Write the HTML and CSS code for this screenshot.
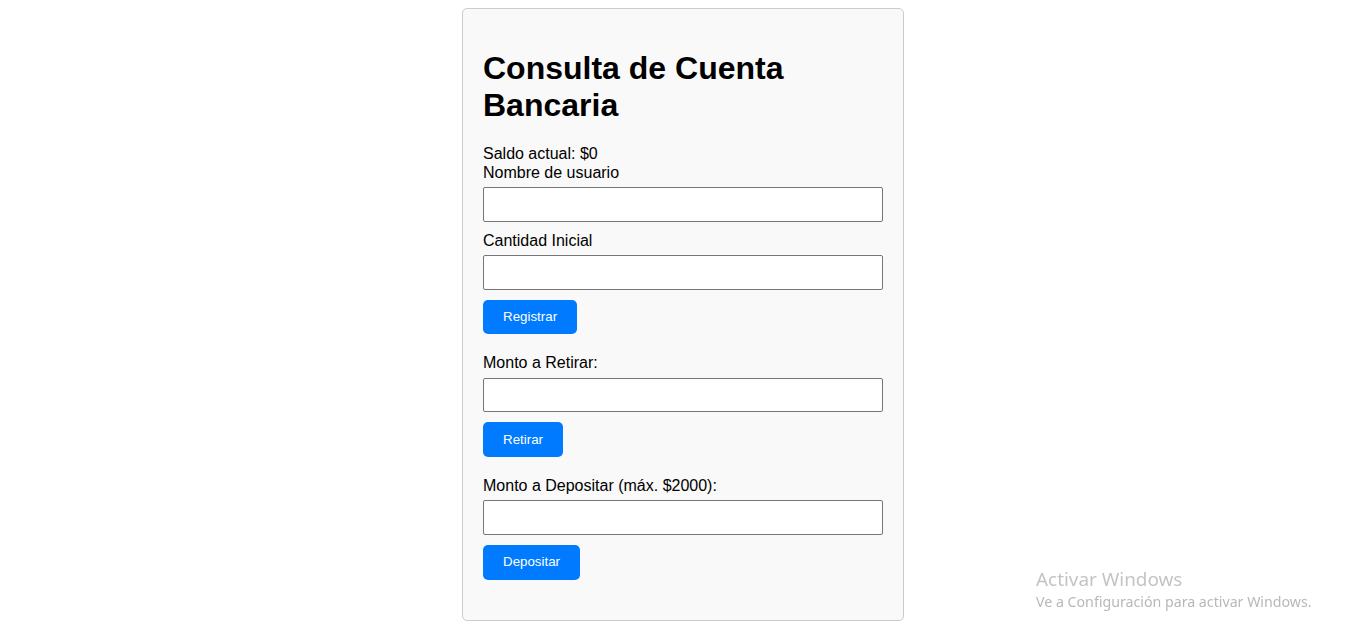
FILE: index.html
```html
<!DOCTYPE html>
<html lang="es">
<head>
<meta charset="utf-8">
<title>Consulta de Cuenta Bancaria</title>
<link rel="stylesheet" href="styles.css">
</head>
<body>
<div class="card">
  <h1 class="title">Consulta de Cuenta Bancaria</h1>
  <div class="balance">Saldo actual: $0</div>
  <div class="section">
    <label class="label" for="user">Nombre de usuario</label>
    <input class="field" id="user" type="text">
    <label class="label" for="initial">Cantidad Inicial</label>
    <input class="field" id="initial" type="text">
    <button class="btn" type="button">Registrar</button>
  </div>
  <div class="section">
    <label class="label" for="withdraw">Monto a Retirar:</label>
    <input class="field" id="withdraw" type="text">
    <button class="btn" type="button">Retirar</button>
  </div>
  <div class="section">
    <label class="label" for="deposit">Monto a Depositar (máx. $2000):</label>
    <input class="field" id="deposit" type="text">
    <button class="btn" type="button">Depositar</button>
  </div>
</div>
<div class="watermark">
  <div class="wm-title">Activar Windows</div>
  <div class="wm-sub">Ve a Configuración para activar Windows.</div>
</div>
</body>
</html>
```

FILE: styles.css
```css
html, body {
  background: #ffffff;
}

body {
  margin: 8px;
  font-family: "Liberation Sans", Arial, sans-serif;
  font-size: 16px;
  line-height: 18.4px;
  color: #000;
}

.card {
  width: 400px;
  margin: 0 auto;
  padding: 20px;
  background: #f9f9f9;
  border: 1px solid #cccccc;
  border-radius: 5px;
}

.title {
  font-size: 32px;
  font-weight: bold;
  line-height: 36.8px;
  margin: 21.44px 0;
}

.balance {
  line-height: 18.4px;
}

.section {
  display: flex;
  flex-direction: column;
  align-items: flex-start;
  margin-bottom: 20px;
}

.label {
  display: block;
  line-height: 18.4px;
  margin-bottom: 5px;
}

.field {
  box-sizing: border-box;
  width: 100%;
  height: 34.6px;
  padding: 8px;
  margin: 0 0 10px;
  font-family: "Liberation Sans", Arial, sans-serif;
  font-size: 14px;
  background: #ffffff;
  border: 1px solid #767676;
  border-radius: 2px;
}

.btn {
  box-sizing: border-box;
  height: 34.6px;
  padding: 0 20px;
  margin: 0;
  font-family: "Liberation Sans", Arial, sans-serif;
  font-size: 13.333px;
  line-height: 16px;
  color: #ffffff;
  background: #007bff;
  border: none;
  border-radius: 5px;
  cursor: pointer;
}

.watermark {
  position: fixed;
  left: 1036px;
  top: 566.5px;
  font-family: "Noto Sans", "Open Sans", sans-serif;
  color: #c4c4c4;
}

.wm-title {
  font-size: 18.9px;
  line-height: 25px;
}

.wm-sub {
  font-size: 14.2px;
  line-height: 20px;
  color: #b8b8b8;
}
```
